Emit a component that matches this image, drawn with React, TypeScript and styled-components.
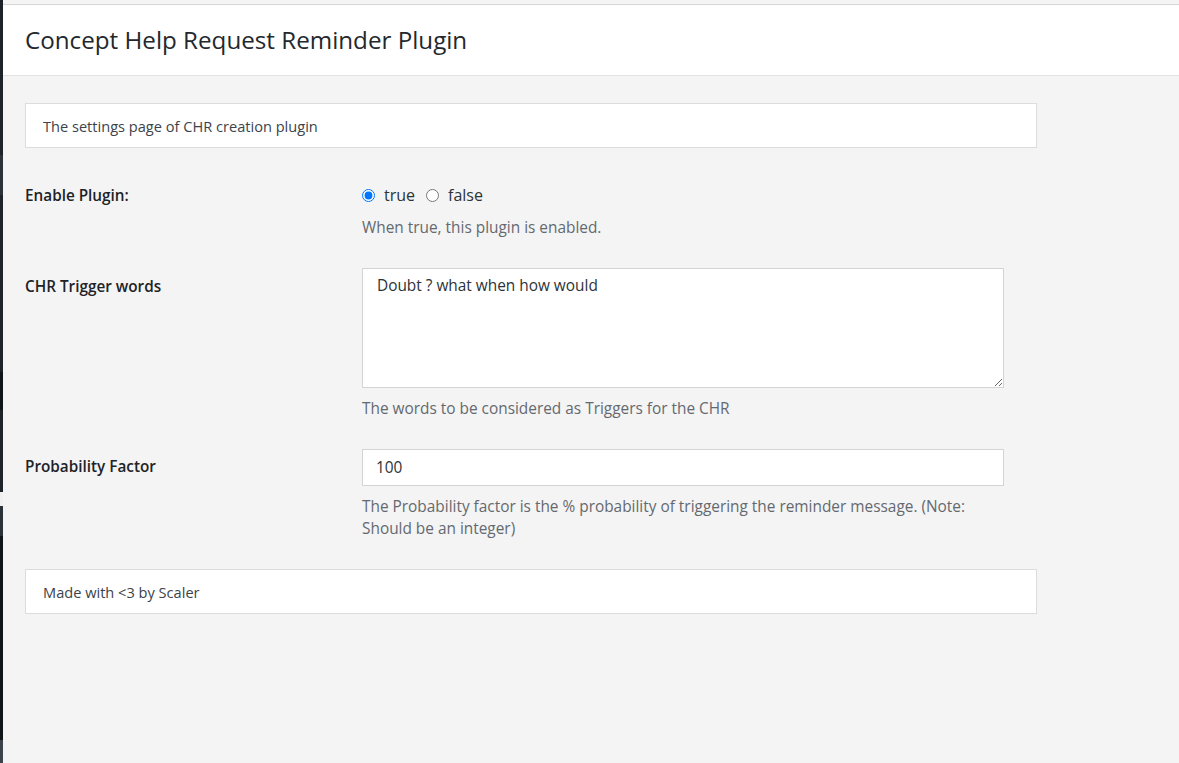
import styled, { createGlobalStyle } from "styled-components";

const GlobalStyle = createGlobalStyle`
  html, body {
    margin: 0;
    padding: 0;
    background: #f4f4f4;
    font-family: "Open Sans", "Liberation Sans", sans-serif;
  }
`;

const Page = styled.div`
  display: flex;
  min-height: 763px;
`;

const SideStrip = styled.div`
  width: 3px;
  flex-shrink: 0;
  display: flex;
  flex-direction: column;
  background: #1d2327;
`;

const StripPart = styled.div<{ $h: number; $c: string }>`
  height: ${(p) => p.$h}px;
  background: ${(p) => p.$c};
  flex-shrink: 0;
`;

const StripFill = styled.div<{ $c: string }>`
  flex: 1;
  background: ${(p) => p.$c};
`;

const Main = styled.div`
  flex: 1;
  display: flex;
  flex-direction: column;
`;

const TopBand = styled.div`
  height: 4px;
  background: #f4f4f4;
  border-bottom: 1px solid #d6d6d6;
`;

const Header = styled.header`
  height: 70px;
  background: #fff;
  border-bottom: 1px solid #e2e2e2;
  display: flex;
  align-items: center;
  padding-left: 22px;
`;

const Title = styled.h1`
  margin: 0;
  font-size: 24.2px;
  font-weight: 400;
  color: #23282d;
  line-height: 1.3;
`;

const Content = styled.div`
  padding: 27px 0 0 22px;
  display: flex;
  flex-direction: column;
`;

const Notice = styled.div`
  width: 1012px;
  box-sizing: border-box;
  background: #fff;
  border: 1px solid #dcdcde;
  padding: 0 17px;
  height: 45px;
  display: flex;
  align-items: center;
  font-size: 14.6px;
  color: #3c434a;
`;

const Form = styled.div`
  display: flex;
  flex-direction: column;
  gap: 29px;
  margin: 36px 0 29px;
`;

const Row = styled.div`
  display: grid;
  grid-template-columns: 337px 642px;
  align-items: start;
`;

const Label = styled.label<{ $offset: number }>`
  padding-top: ${(p) => p.$offset}px;
  font-size: 15.3px;
  font-weight: 600;
  line-height: 22px;
  color: #1d2327;
`;

const Field = styled.div`
  display: flex;
  flex-direction: column;
`;

const RadioLine = styled.div`
  display: flex;
  align-items: center;
  height: 22px;
`;

const RadioOption = styled.label`
  display: flex;
  align-items: center;
  gap: 9px;
  margin-right: 11px;
  font-size: 16px;
  color: #2c3338;
`;

const Radio = styled.input`
  margin: 0;
  width: 13px;
  height: 13px;
  accent-color: #0075ff;
`;

const Description = styled.p<{ $gap: number }>`
  margin: ${(p) => p.$gap}px 0 0;
  font-size: 15.4px;
  line-height: 22px;
  color: #646970;
`;

const TextArea = styled.textarea`
  width: 642px;
  height: 120px;
  box-sizing: border-box;
  margin: 0;
  border: 1px solid #d4d4d4;
  border-radius: 0;
  padding: 6px 14px;
  font-family: inherit;
  font-size: 15.4px;
  line-height: 22px;
  color: #2c3338;
  background: #fff;
  display: block;
`;

const TextInput = styled.input`
  width: 642px;
  height: 37px;
  box-sizing: border-box;
  margin: 0;
  border: 1px solid #d4d4d4;
  border-radius: 0;
  padding: 0 13px;
  font-family: inherit;
  font-size: 15.4px;
  color: #2c3338;
  background: #fff;
`;

export default function App() {
  return (
    <>
      <GlobalStyle />
      <Page>
        <SideStrip>
          <StripPart $h={155} $c="#1d2327" />
          <StripPart $h={40} $c="#2c3338" />
          <StripPart $h={177} $c="#1d2327" />
          <StripPart $h={38} $c="#101517" />
          <StripPart $h={82} $c="#1d2327" />
          <StripPart $h={14} $c="#f0f0f1" />
          <StripPart $h={30} $c="#2c3338" />
          <StripPart $h={204} $c="#101517" />
          <StripFill $c="#3c434a" />
        </SideStrip>
        <Main>
          <TopBand />
          <Header>
            <Title>Concept Help Request Reminder Plugin</Title>
          </Header>
          <Content>
            <Notice>The settings page of CHR creation plugin</Notice>
            <Form>
              <Row>
                <Label $offset={0}>Enable Plugin:</Label>
                <Field>
                  <RadioLine>
                    <RadioOption>
                      <Radio type="radio" name="enable" defaultChecked />
                      true
                    </RadioOption>
                    <RadioOption>
                      <Radio type="radio" name="enable" />
                      false
                    </RadioOption>
                  </RadioLine>
                  <Description $gap={11}>When true, this plugin is enabled.</Description>
                </Field>
              </Row>
              <Row>
                <Label $offset={7}>CHR Trigger words</Label>
                <Field>
                  <TextArea defaultValue="Doubt ? what when how would" />
                  <Description $gap={10}>The words to be considered as Triggers for the CHR</Description>
                </Field>
              </Row>
              <Row>
                <Label $offset={6}>Probability Factor</Label>
                <Field>
                  <TextInput type="text" defaultValue="100" />
                  <Description $gap={10}>
                    The Probability factor is the % probability of triggering the reminder message. (Note:
                    Should be an integer)
                  </Description>
                </Field>
              </Row>
            </Form>
            <Notice>Made with &lt;3 by Scaler</Notice>
          </Content>
        </Main>
      </Page>
    </>
  );
}
